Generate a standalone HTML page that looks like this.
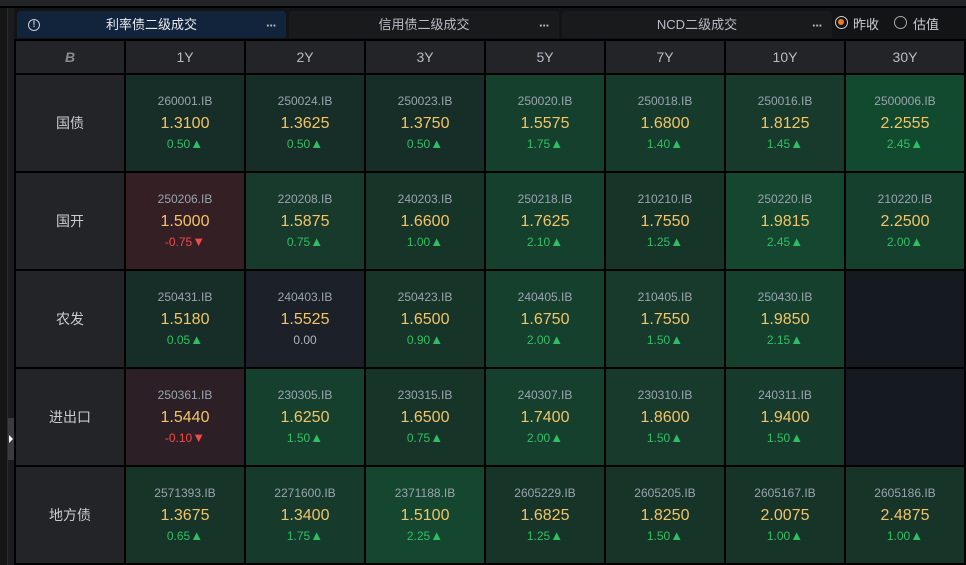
<!DOCTYPE html>
<html><head><meta charset="utf-8"><style>
*{margin:0;padding:0;box-sizing:border-box}
body{width:966px;height:565px;background:#131416;overflow:hidden;font-family:"Liberation Sans","Noto Sans CJK SC",sans-serif;position:relative}
.top{position:absolute;left:0;top:0;width:966px;height:6px;background:#232428}
.top2{position:absolute;left:0;top:6px;width:966px;height:2px;background:#000}
.ls{position:absolute;left:0;top:8px;width:7px;height:557px;background:#161616}
.sb{position:absolute;left:7px;top:8px;width:7px;height:557px;background:#1c1c1e;border-left:1px solid #2a2a2a}
.sbt{position:absolute;left:8px;top:418px;width:6px;height:42px;background:#3a3b3e}
.tab{position:absolute;top:11px;height:27px;background:#191a1c;border-radius:4px 4px 0 0;color:#b8bcc4;font-size:13px;line-height:28px;text-align:center}
.tab .d{position:absolute;right:10px;top:1px;color:#bbb;font-size:13px;letter-spacing:-1px;font-weight:bold}
.tab.act{background:#12243b;color:#e8ecf2}
.info{position:absolute;left:11px;top:8px;width:12px;height:12px;border:1.5px solid #c8ccd2;border-radius:50%;font-size:9px;line-height:9px;font-weight:bold;color:#c8ccd2}
.radio{position:absolute;top:16px;width:13px;height:13px;border-radius:50%;border:1.5px solid #aaa}
.rl{position:absolute;top:14px;color:#c8ccd2;font-size:13px}
.grid{position:absolute;left:14px;top:39px;width:952px;height:526px;background:#000;display:grid;grid-template-columns:108px repeat(7,118px);grid-template-rows:32px repeat(5,96px);gap:2px;padding:2px 0 0 2px}
.h{background:#232428;color:#b8bcc4;font-size:14px;display:flex;align-items:center;justify-content:center}
.l{background:#232428;color:#c8ccd2;font-size:14px;display:flex;align-items:center;justify-content:center}
.c{text-align:center;padding-top:19px}
.c .a{color:#9aa4ae;font-size:12px;height:14px;line-height:14px}
.c .b{color:#f2c467;font-size:16px;margin-top:6px;height:20px;line-height:20px}
.c .g{color:#2fbf62;font-size:12px;margin-top:3px;line-height:14px}
.c .r{color:#f04a4a;font-size:12px;margin-top:3px;line-height:14px}
.c .n{color:#b0b4ba;font-size:12px;margin-top:3px;line-height:14px}
.c i{font-style:normal;font-size:13px}
</style></head><body>
<div class="top"></div><div class="top2"></div>
<div class="ls"></div><div class="sb"></div><div class="sbt"></div>
<div style="position:absolute;left:9px;top:435px;width:0;height:0;border-top:4px solid transparent;border-bottom:4px solid transparent;border-left:4px solid #fff"></div>
<div class="tab act" style="left:17px;width:269px"><div class="info">!</div>利率债二级成交<span class="d">···</span></div>
<div class="tab" style="left:289px;width:270px">信用债二级成交<span class="d">···</span></div>
<div class="tab" style="left:562px;width:270px">NCD二级成交<span class="d">···</span></div>
<div class="radio" style="left:835px;border-color:#ccc"><div style="position:absolute;left:2px;top:2px;width:6px;height:6px;border-radius:50%;background:#f47a20"></div></div>
<span class="rl" style="left:853px">昨收</span>
<div class="radio" style="left:894px"></div>
<span class="rl" style="left:913px">估值</span>
<div class="grid">
<div class="h" style="color:#8a8a8a;font-weight:900;font-style:italic;font-size:14px">B</div>
<div class="h">1Y</div><div class="h">2Y</div><div class="h">3Y</div><div class="h">5Y</div><div class="h">7Y</div><div class="h">10Y</div><div class="h">30Y</div>

<div class="l">国债</div>
<div class="c" style="background:#172e28"><div class="a">260001.IB</div><div class="b">1.3100</div><div class="g">0.50<i>▲</i></div></div>
<div class="c" style="background:#172e28"><div class="a">250024.IB</div><div class="b">1.3625</div><div class="g">0.50<i>▲</i></div></div>
<div class="c" style="background:#172e28"><div class="a">250023.IB</div><div class="b">1.3750</div><div class="g">0.50<i>▲</i></div></div>
<div class="c" style="background:#16402e"><div class="a">250020.IB</div><div class="b">1.5575</div><div class="g">1.75<i>▲</i></div></div>
<div class="c" style="background:#163a2c"><div class="a">250018.IB</div><div class="b">1.6800</div><div class="g">1.40<i>▲</i></div></div>
<div class="c" style="background:#173a2c"><div class="a">250016.IB</div><div class="b">1.8125</div><div class="g">1.45<i>▲</i></div></div>
<div class="c" style="background:#124a30"><div class="a">2500006.IB</div><div class="b">2.2555</div><div class="g">2.45<i>▲</i></div></div>

<div class="l">国开</div>
<div class="c" style="background:#341f24"><div class="a">250206.IB</div><div class="b">1.5000</div><div class="r">-0.75<i>▼</i></div></div>
<div class="c" style="background:#173a2c"><div class="a">220208.IB</div><div class="b">1.5875</div><div class="g">0.75<i>▲</i></div></div>
<div class="c" style="background:#173429"><div class="a">240203.IB</div><div class="b">1.6600</div><div class="g">1.00<i>▲</i></div></div>
<div class="c" style="background:#16402e"><div class="a">250218.IB</div><div class="b">1.7625</div><div class="g">2.10<i>▲</i></div></div>
<div class="c" style="background:#173429"><div class="a">210210.IB</div><div class="b">1.7550</div><div class="g">1.25<i>▲</i></div></div>
<div class="c" style="background:#15462f"><div class="a">250220.IB</div><div class="b">1.9815</div><div class="g">2.45<i>▲</i></div></div>
<div class="c" style="background:#16402e"><div class="a">210220.IB</div><div class="b">2.2500</div><div class="g">2.00<i>▲</i></div></div>

<div class="l">农发</div>
<div class="c" style="background:#172e28"><div class="a">250431.IB</div><div class="b">1.5180</div><div class="g">0.05<i>▲</i></div></div>
<div class="c" style="background:#1c2028"><div class="a">240403.IB</div><div class="b">1.5525</div><div class="n">0.00</div></div>
<div class="c" style="background:#173429"><div class="a">250423.IB</div><div class="b">1.6500</div><div class="g">0.90<i>▲</i></div></div>
<div class="c" style="background:#16402e"><div class="a">240405.IB</div><div class="b">1.6750</div><div class="g">2.00<i>▲</i></div></div>
<div class="c" style="background:#173a2c"><div class="a">210405.IB</div><div class="b">1.7550</div><div class="g">1.50<i>▲</i></div></div>
<div class="c" style="background:#15402e"><div class="a">250430.IB</div><div class="b">1.9850</div><div class="g">2.15<i>▲</i></div></div>
<div style="background:#151a21"></div>

<div class="l">进出口</div>
<div class="c" style="background:#2c2026"><div class="a">250361.IB</div><div class="b">1.5440</div><div class="r">-0.10<i>▼</i></div></div>
<div class="c" style="background:#16402e"><div class="a">230305.IB</div><div class="b">1.6250</div><div class="g">1.50<i>▲</i></div></div>
<div class="c" style="background:#173429"><div class="a">230315.IB</div><div class="b">1.6500</div><div class="g">0.75<i>▲</i></div></div>
<div class="c" style="background:#16402e"><div class="a">240307.IB</div><div class="b">1.7400</div><div class="g">2.00<i>▲</i></div></div>
<div class="c" style="background:#173a2c"><div class="a">230310.IB</div><div class="b">1.8600</div><div class="g">1.50<i>▲</i></div></div>
<div class="c" style="background:#163a2c"><div class="a">240311.IB</div><div class="b">1.9400</div><div class="g">1.50<i>▲</i></div></div>
<div style="background:#151a21"></div>

<div class="l">地方债</div>
<div class="c" style="background:#173429"><div class="a">2571393.IB</div><div class="b">1.3675</div><div class="g">0.65<i>▲</i></div></div>
<div class="c" style="background:#163a2c"><div class="a">2271600.IB</div><div class="b">1.3400</div><div class="g">1.75<i>▲</i></div></div>
<div class="c" style="background:#15462f"><div class="a">2371188.IB</div><div class="b">1.5100</div><div class="g">2.25<i>▲</i></div></div>
<div class="c" style="background:#173429"><div class="a">2605229.IB</div><div class="b">1.6825</div><div class="g">1.25<i>▲</i></div></div>
<div class="c" style="background:#173429"><div class="a">2605205.IB</div><div class="b">1.8250</div><div class="g">1.50<i>▲</i></div></div>
<div class="c" style="background:#173429"><div class="a">2605167.IB</div><div class="b">2.0075</div><div class="g">1.00<i>▲</i></div></div>
<div class="c" style="background:#173429"><div class="a">2605186.IB</div><div class="b">2.4875</div><div class="g">1.00<i>▲</i></div></div>
</div>
</body></html>
